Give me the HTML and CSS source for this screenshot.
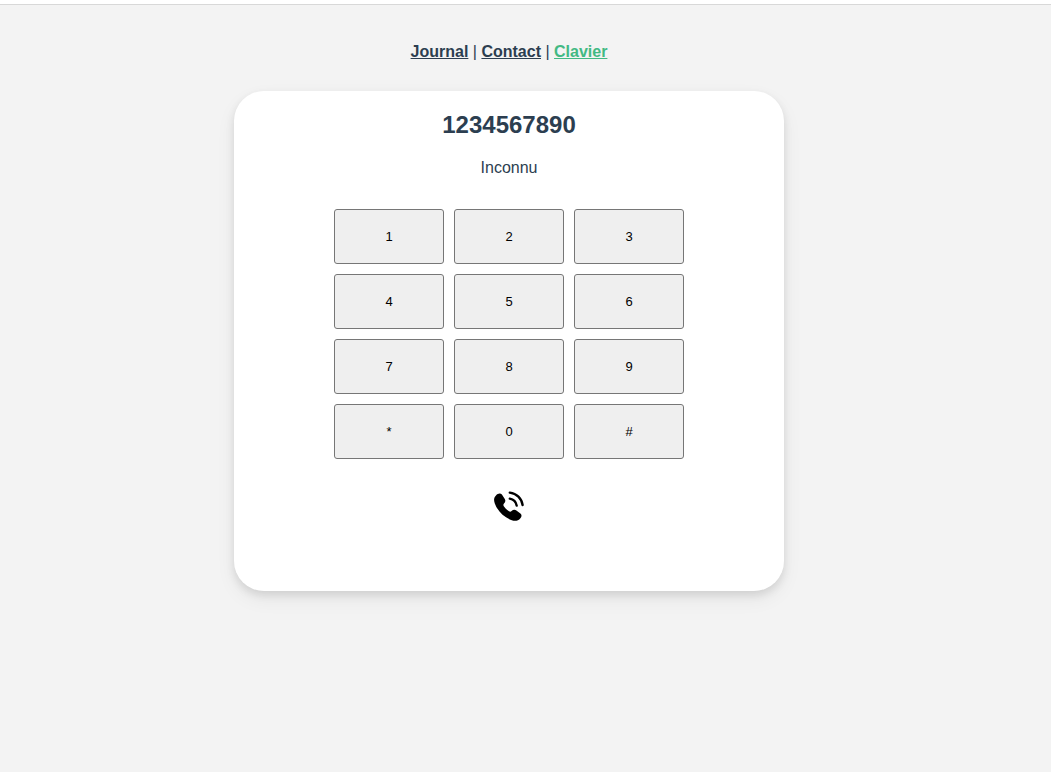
FILE: index.html
```
<!DOCTYPE html>
<html lang="fr">
<head>
<meta charset="utf-8">
<meta name="viewport" content="width=device-width, initial-scale=1">
<title>Clavier</title>
<link rel="stylesheet" href="styles.css">
</head>
<body>
<header class="topbar"></header>
<div class="app">
  <nav class="nav"><a class="nav-link" href="#journal">Journal</a> | <a class="nav-link" href="#contact">Contact</a> | <a class="nav-link active" href="#clavier">Clavier</a></nav>
  <main class="card">
    <h2 class="number">1234567890</h2>
    <p class="caller">Inconnu</p>
    <div class="keypad">
      <button class="key" type="button">1</button>
      <button class="key" type="button">2</button>
      <button class="key" type="button">3</button>
      <button class="key" type="button">4</button>
      <button class="key" type="button">5</button>
      <button class="key" type="button">6</button>
      <button class="key" type="button">7</button>
      <button class="key" type="button">8</button>
      <button class="key" type="button">9</button>
      <button class="key" type="button">*</button>
      <button class="key" type="button">0</button>
      <button class="key" type="button">#</button>
    </div>
    <button class="call" type="button" aria-label="Appeler">
      <svg class="call-icon" viewBox="0 0 30 30" aria-hidden="true">
        <path d="M2 4.4C3.8 2.4 6.4 1.8 7.9 3.6L10.8 7.9C11.8 9.6 11.4 11.2 10 12.6C9.2 13.4 9.2 14.2 9.8 15.2C11.2 17.3 12.9 19 15 20.3C16 20.9 16.8 20.8 17.6 20C19 18.6 20.8 18.3 22.4 19.4L26.4 22.4C28 23.8 27.8 25.6 26.4 27.2C24.3 29.8 21.3 30.5 17.8 29.3C9.7 26.2 3.5 19.8 .8 12.4C-.4 9-.2 6.6 2 4.4Z"/>
        <path class="wave" d="M15.8 7.6C19.4 8.2 22 10.8 22.7 14.6"/>
        <path class="wave" d="M15.8 1.6C22.7 2.4 27.6 7.4 28.6 14"/>
      </svg>
    </button>
  </main>
</div>
</body>
</html>
```
FILE: styles.css
```
* {
  box-sizing: border-box;
}

body {
  margin: 0;
  min-height: 100vh;
  background: #f3f3f3;
  color: #2c3e50;
  font: 16px/18px "Liberation Sans", Arial, sans-serif;
}

.topbar {
  height: 5px;
  background: #fff;
  border-bottom: 1px solid #d8d8d8;
}

.app {
  display: flex;
  flex-direction: column;
  align-items: center;
  padding: 8px 33px 32px 0;
}

.nav {
  padding: 30px;
}

.nav-link {
  color: #2c3e50;
  font-weight: bold;
}

.nav-link.active {
  color: #42b983;
}

.card {
  display: flex;
  flex-direction: column;
  align-items: center;
  width: 100%;
  max-width: 550px;
  padding: 20px 20px 70px;
  background: #fff;
  border-radius: 30px;
  box-shadow: 0 4px 8px rgba(0, 0, 0, 0.1), 0 8px 20px rgba(0, 0, 0, 0.06);
}

.number {
  margin: 0;
  font-size: 24px;
  line-height: 28px;
}

.caller {
  margin: 20px 0 32px;
}

.keypad {
  display: grid;
  grid-template-columns: repeat(3, 110px);
  grid-auto-rows: 55px;
  gap: 10px;
}

.key {
  padding: 0;
  border: 1px solid #767676;
  border-radius: 3px;
  background: #efefef;
  color: #000;
  font: 13px "Liberation Sans", Arial, sans-serif;
}

.call {
  display: flex;
  margin-top: 32px;
  padding: 0;
  border: 0;
  background: none;
  color: #000;
}

.call-icon {
  width: 30px;
  height: 30px;
  fill: currentColor;
}

.wave {
  fill: none;
  stroke: currentColor;
  stroke-width: 2.4;
  stroke-linecap: round;
}
```
